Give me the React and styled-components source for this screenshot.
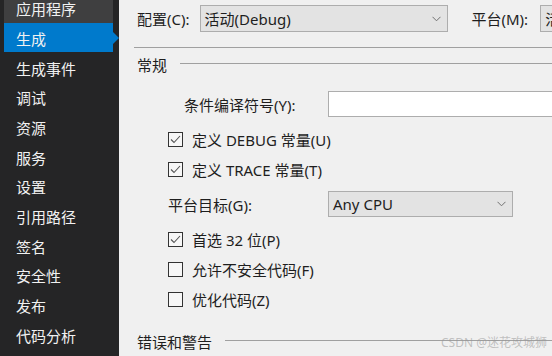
import React from "react";
import styled, { createGlobalStyle } from "styled-components";

const Global = createGlobalStyle`
  html, body { margin: 0; padding: 0; }
  body {
    font-family: "Noto Sans", "Noto Sans CJK SC", sans-serif;
    font-size: 15px;
    background: #f0f0f0;
  }
`;

const Page = styled.div`
  position: relative;
  display: flex;
  width: 552px;
  height: 356px;
  overflow: hidden;
  background: #f0f0f0;
`;

const Sidebar = styled.nav`
  width: 119px;
  flex: none;
  background: #252526;
  display: flex;
  flex-direction: column;
  margin-top: -7px;
  padding-bottom: 7px;
`;

const NavItem = styled.div`
  position: relative;
  box-sizing: border-box;
  height: 30px;
  display: flex;
  align-items: center;
  margin: 0 6px 0 4px;
  padding: 2px 0 0 12px;
  color: #f1f1f1;
  font-size: 15px;
  background: ${(p) => (p.$active ? "#007acc" : p.$hover ? "#3f3f40" : "transparent")};
  ${(p) =>
    p.$active &&
    `&::after {
      content: "";
      position: absolute;
      right: -6px;
      top: 50%;
      margin-top: -6px;
      border-left: 6px solid #007acc;
      border-top: 6px solid transparent;
      border-bottom: 6px solid transparent;
    }`}
`;

const Main = styled.main`
  flex: 1;
  min-width: 0;
  display: flex;
  flex-direction: column;
  padding: 5px 0 0 15px;
  color: #1e1e1e;
`;

const TopBar = styled.div`
  display: flex;
  align-items: center;
  height: 27px;
  padding-left: 3px;
  white-space: nowrap;
`;

const TopLabel = styled.span`
  margin-right: ${(p) => p.$gap || 10}px;
  margin-left: ${(p) => p.$left || 0}px;
`;

const Select = styled.div`
  box-sizing: border-box;
  flex: none;
  width: ${(p) => p.$w}px;
  height: ${(p) => p.$h || 26}px;
  display: flex;
  align-items: center;
  justify-content: space-between;
  padding: 0 6px 0 4px;
  background: #e3e3e3;
  border: 1px solid #adadad;
  white-space: nowrap;
  overflow: hidden;
`;

const Chevron = () => (
  <svg width="9" height="6" viewBox="0 0 9 6" style={{ flex: "none" }}>
    <polyline points="0.5,0.8 4.5,4.8 8.5,0.8" fill="none" stroke="#707070" strokeWidth="1" />
  </svg>
);

const Divider = styled.div`
  height: 1px;
  background: #a0a0a0;
  margin-top: 15px;
`;

const SectionHeader = styled.div`
  display: flex;
  align-items: center;
  height: 20px;
  margin-top: ${(p) => p.$mt}px;
  padding-left: 3px;
  white-space: nowrap;
`;

const HeaderLine = styled.div`
  flex: 1;
  height: 1px;
  background: #a0a0a0;
  margin-left: 13px;
  margin-top: -2px;
`;

const Row = styled.div`
  display: flex;
  align-items: center;
  height: 30px;
  margin-top: ${(p) => p.$mt || 0}px;
  padding-left: ${(p) => p.$indent}px;
  white-space: nowrap;
`;

const FieldLabel = styled.span`
  width: ${(p) => p.$w}px;
  flex: none;
`;

const TextInput = styled.div`
  box-sizing: border-box;
  flex: none;
  width: 240px;
  height: 26px;
  background: #ffffff;
  border: 1px solid #adadad;
`;

const Box = styled.span`
  box-sizing: border-box;
  width: 15px;
  height: 15px;
  flex: none;
  border: 1px solid #333333;
  background: #f7f7f7;
  margin-right: 9px;
  display: flex;
  align-items: center;
  justify-content: center;
`;

const Tick = () => (
  <svg width="11" height="9" viewBox="0 0 11 9">
    <polyline points="1,4.5 4,7.5 10,1" fill="none" stroke="#555" strokeWidth="1.1" />
  </svg>
);

const Check = ({ checked, label, mt }) => (
  <Row $indent={34} $mt={mt}>
    <Box>{checked && <Tick />}</Box>
    <span>{label}</span>
  </Row>
);

const Watermark = styled.div`
  position: absolute;
  right: 5px;
  bottom: 5px;
  font-size: 12px;
  color: rgba(150, 150, 150, 0.55);
  font-family: "Noto Sans", "Noto Sans CJK SC", sans-serif;
`;

const navItems = ["应用程序", "生成", "生成事件", "调试", "资源", "服务", "设置", "引用路径", "签名", "安全性", "发布", "代码分析"];

export default function App() {
  return (
    <Page>
      <Global />
      <Sidebar>
        {navItems.map((t, i) => (
          <NavItem key={t} $active={i === 1} $hover={i === 0}>
            {t}
          </NavItem>
        ))}
      </Sidebar>
      <Main>
        <TopBar>
          <TopLabel>配置(C):</TopLabel>
          <Select $w={248} $h={27}>
            <span>活动(Debug)</span>
            <Chevron />
          </Select>
          <TopLabel $left={24} $gap={12}>平台(M):</TopLabel>
          <Select $w={120} $h={27}>
            <span>活动(Any CPU)</span>
          </Select>
        </TopBar>
        <Divider />
        <SectionHeader $mt={6}>
          <span>常规</span>
          <HeaderLine />
        </SectionHeader>
        <Row $mt={15} $indent={50}>
          <FieldLabel $w={144}>条件编译符号(Y):</FieldLabel>
          <TextInput />
        </Row>
        <Check checked mt={5} label="定义 DEBUG 常量(U)" />
        <Check checked label="定义 TRACE 常量(T)" />
        <Row $mt={5} $indent={34}>
          <FieldLabel $w={160}>平台目标(G):</FieldLabel>
          <Select $w={185}>
            <span>Any CPU</span>
            <Chevron />
          </Select>
        </Row>
        <Check checked mt={5} label="首选 32 位(P)" />
        <Check label="允许不安全代码(F)" />
        <Check label="优化代码(Z)" />
        <SectionHeader $mt={17}>
          <span>错误和警告</span>
          <HeaderLine />
        </SectionHeader>
      </Main>
      <Watermark>CSDN @迷花攻城狮</Watermark>
    </Page>
  );
}
